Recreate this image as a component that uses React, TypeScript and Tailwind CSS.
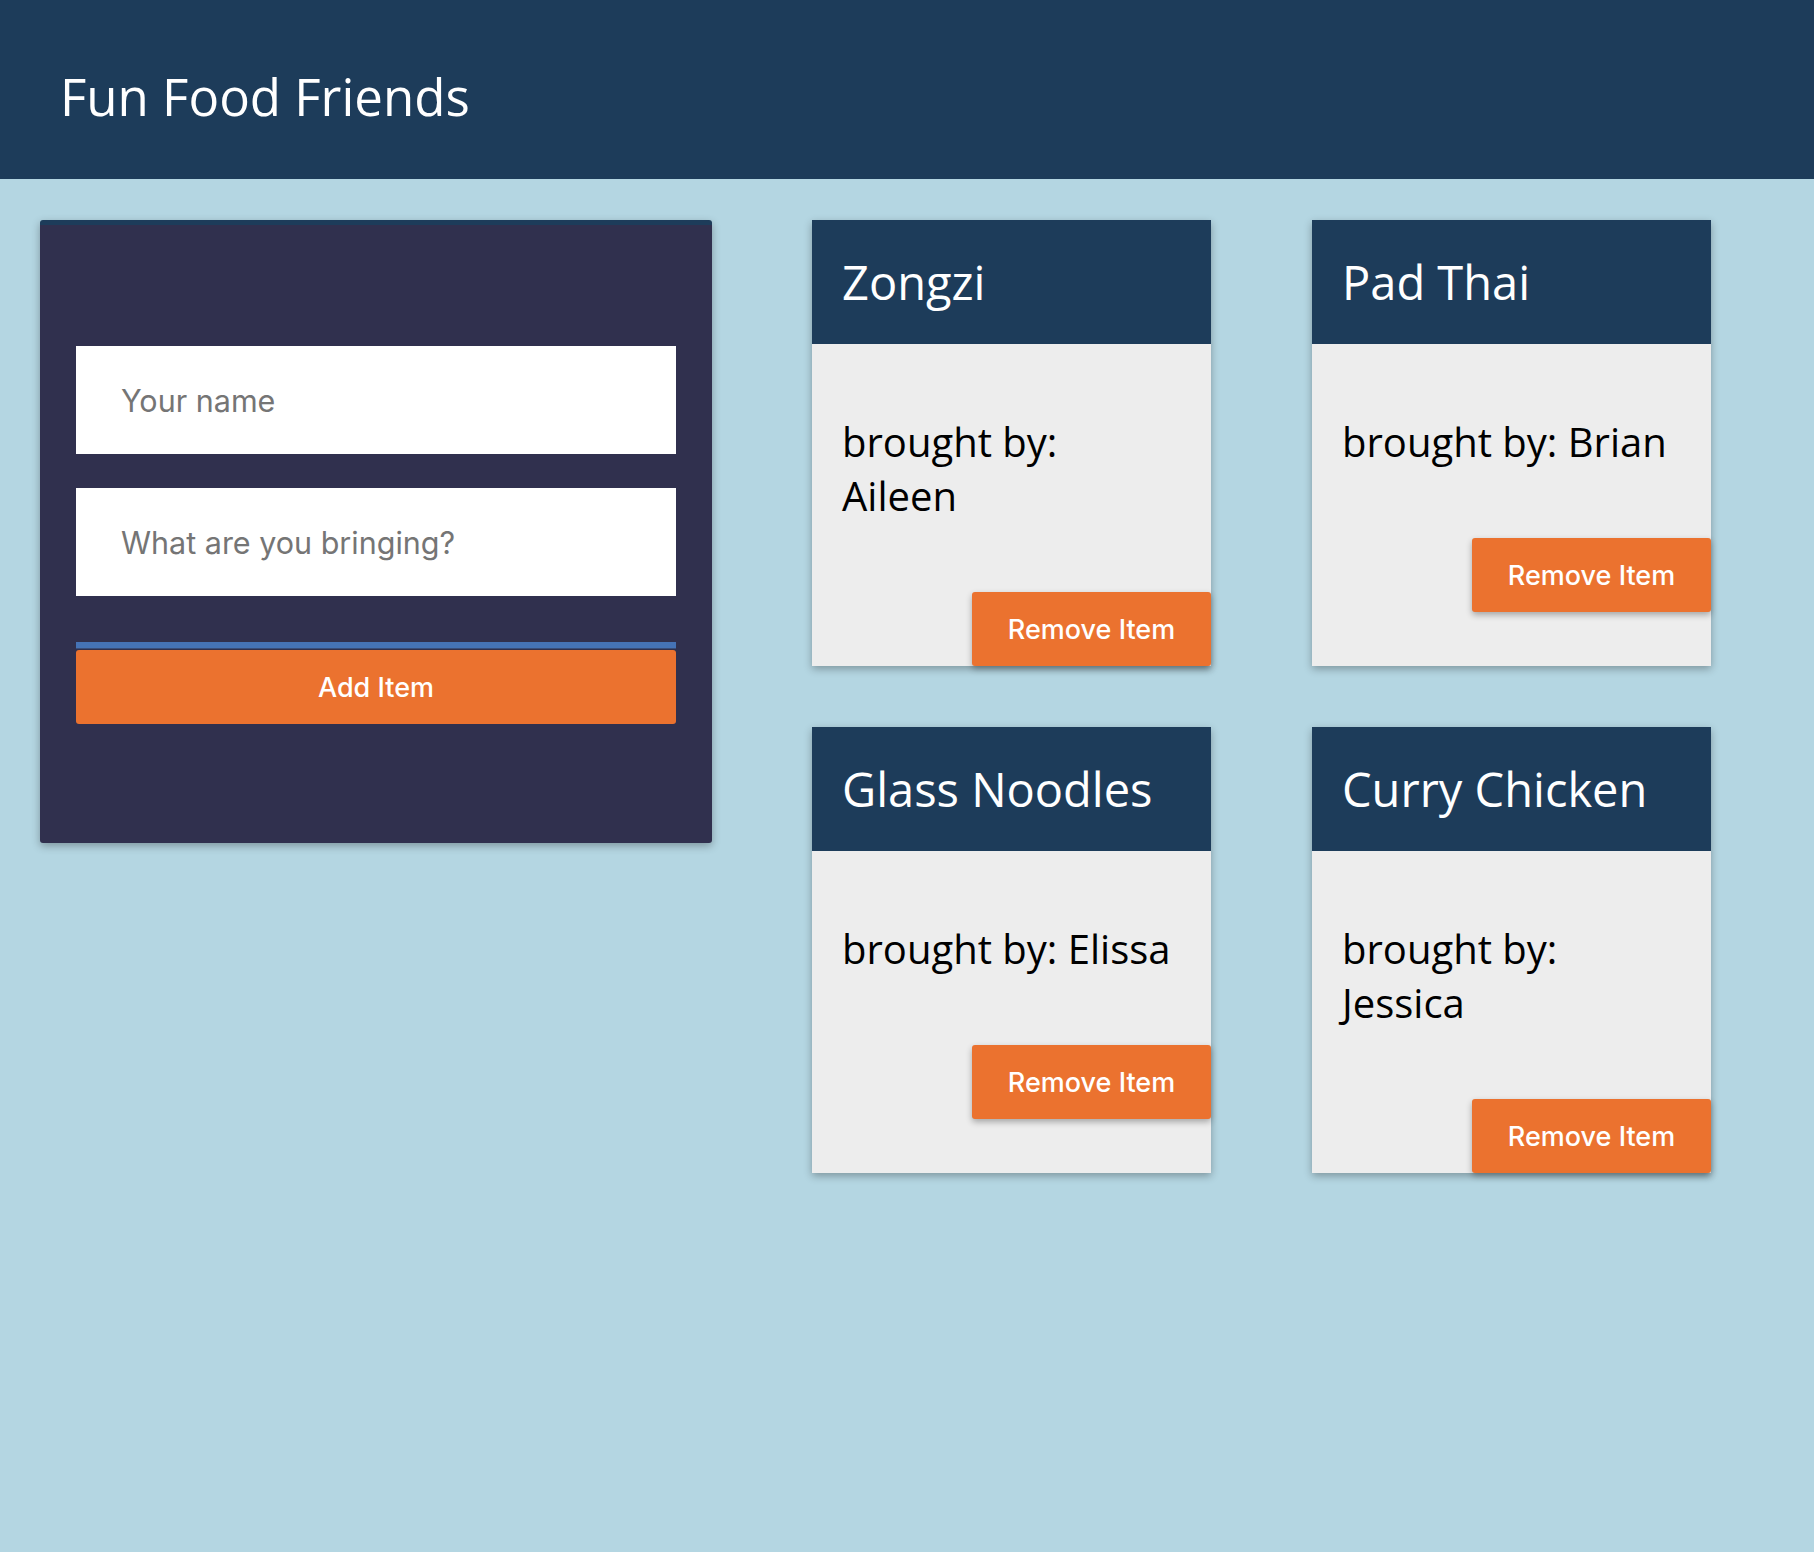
const items = [
  { id: 1, title: 'Zongzi', user: 'Aileen' },
  { id: 2, title: 'Pad Thai', user: 'Brian' },
  { id: 3, title: 'Glass Noodles', user: 'Elissa' },
  { id: 4, title: 'Curry Chicken', user: 'Jessica' },
];

const openSans = { fontFamily: '"Open Sans", "Noto Sans", sans-serif' };
const uiSans = { fontFamily: 'Inter, "Liberation Sans", sans-serif' };

export default function App() {
  return (
    <div className="min-h-[1552px] bg-[#b4d6e2]">
      {/* Header */}
      <header className="h-[179px] bg-[#1d3c5a] flex items-center px-[60px] pt-[14px]">
        <h1 className="text-white text-[51px] leading-none" style={openSans}>
          Fun Food Friends
        </h1>
      </header>

      <div className="flex items-start pt-[41px] pl-[40px] gap-[100px]">
        {/* Add form */}
        <section className="w-[672px] h-[623px] bg-[#30304e] border-t-[5px] border-[#1d3c5a] rounded-[3px] shadow-[0_3px_8px_rgba(0,0,0,0.3)] px-[36px] pt-[121px]">
          <form className="flex flex-col" onSubmit={(e) => e.preventDefault()}>
            <input
              type="text"
              placeholder="Your name"
              className="h-[108px] w-full bg-white pl-[45px] text-[30.5px] text-[#333] placeholder:text-[#757575] outline-none"
              style={uiSans}
            />
            <input
              type="text"
              placeholder="What are you bringing?"
              className="mt-[34px] h-[108px] w-full bg-white pl-[45px] text-[30.5px] text-[#333] placeholder:text-[#757575] outline-none"
              style={uiSans}
            />
            <div className="mt-[46px] h-[7px] bg-[#4573b6] border-b border-[#3a4f7a]" />
            <button
              className="mt-[1px] h-[74px] w-full bg-[#eb722f] rounded-[3px] pt-[3px] text-white text-[27px] font-medium"
              style={uiSans}
            >
              Add Item
            </button>
          </form>
        </section>

        {/* Items */}
        <section className="grid grid-cols-[399px_399px] gap-x-[101px] gap-y-[61px]">
          {items.map((item) => (
            <div
              key={item.id}
              className="h-[446px] bg-[#ededed] shadow-[0_3px_8px_rgba(0,0,0,0.3)] flex flex-col"
            >
              <div className="h-[124px] bg-[#1d3c5a] flex items-center px-[30px]">
                <h3 className="text-white text-[47px] leading-none" style={openSans}>
                  {item.title}
                </h3>
              </div>
              <p
                className="pl-[30px] pr-[36px] mt-[71px] mb-[69px] text-black text-[40px] leading-[54px]"
                style={openSans}
              >
                brought by: {item.user}
              </p>
              <div className="flex justify-end">
                <button
                  className="w-[239px] h-[74px] bg-[#eb722f] rounded-[3px] pt-[3px] text-white text-[27px] font-medium shadow-[0_3px_6px_rgba(0,0,0,0.3)]"
                  style={uiSans}
                >
                  Remove Item
                </button>
              </div>
            </div>
          ))}
        </section>
      </div>
    </div>
  );
}
